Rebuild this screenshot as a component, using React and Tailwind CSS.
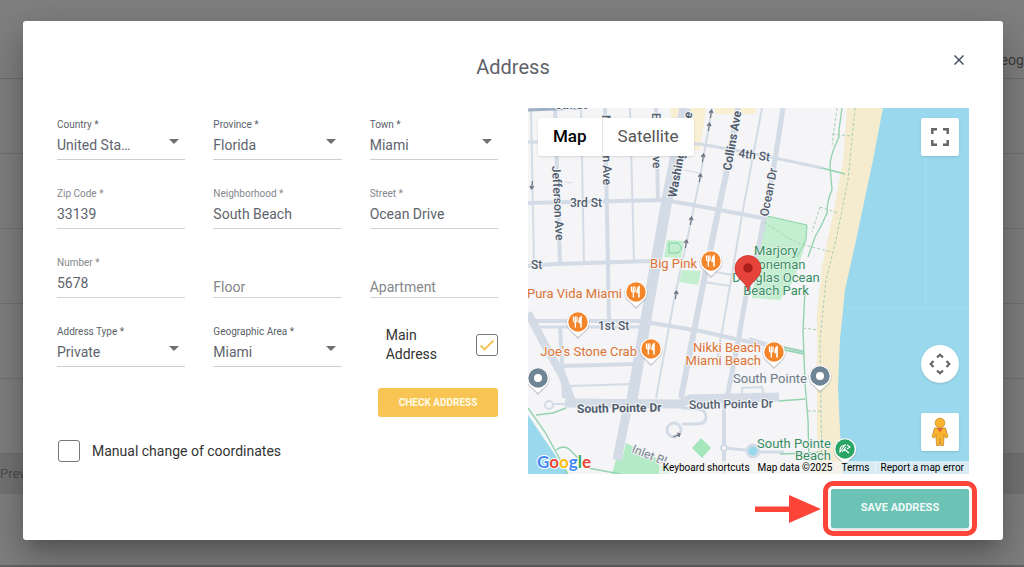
import { useState } from 'react'
import clsx from 'clsx'

const STREET = '#d3dce6'

const streets = [
  // north - south
  { d: 'M531 108 L534 264', w: 2 },
  { d: 'M555 108 L560 263', w: 4 },
  { d: 'M581 108 L584 262', w: 2 },
  { d: 'M605 108 L609 321', w: 4 },
  { d: 'M630 108 L634 261', w: 2 },
  { d: 'M656 108 L658 200', w: 4 },
  { d: 'M685 108 L667 200 L651 290 L632 400', w: 11 },
  { d: 'M629 400 L617 460', w: 9 },
  { d: 'M712 108 L700 178 L686 245 L674 300 L656 398', w: 2 },
  { d: 'M738 108 L727 170 L718 212 L703 285 L681 398', w: 6 },
  { d: 'M762 108 L742 215 L731 280 L717 360', w: 2 },
  { d: 'M783 108 L775 160 L760 240 L747 290 L738 342 L727 398', w: 5 },
  // east - west
  { d: 'M528 142 L660 143 L700 144 L745 152 L775 158 L822 168', w: 3 },
  { d: 'M528 203 L665 200 L720 210 L762 218', w: 4 },
  { d: 'M528 266 L555 264 L652 261', w: 4 },
  { d: 'M704 270 L733 275', w: 2 },
  { d: 'M704 282 L730 286', w: 2 },
  { d: 'M684 170 L699 173', w: 1 },
  { d: 'M565 182 L572 183', w: 1 },
  { d: 'M536 321 L640 321 L700 331 L740 340 L803 352', w: 4 },
  { d: 'M538 327 L640 327', w: 3 },
  { d: 'M562 366 L637 364', w: 4 },
  { d: 'M570 386 L632 384', w: 2 },
  { d: 'M528 313 L545 345 L562 375 L573 404', w: 8 },
  { d: 'M560 326 L564 398', w: 4 },
  { d: 'M565 403 L680 404 L690 399 L779 397', w: 9 },
  { d: 'M681 408 L698 409 Q706 410 706 417 Q706 424 696 424 L682 424', w: 3 },
  { d: 'M724 398 L724 474', w: 4 },
  { d: 'M724 448 L746 450 M760 452 L784 452', w: 3 },
  { d: 'M742 396 L742 388 L762 387 L764 395', w: 2 },
  { d: 'M749 338 L775 346', w: 2 },
  { d: 'M554 404 L566 404', w: 2 },
  { d: 'M728 398 L734 366', w: 2 },
]

const paths = [
  'M842 108 L839 130 L839 137 Q830 155 830 167 L832 190 Q827 200 827 213 Q822 225 815 237 L808 257',
  'M805 290 L803 330 L805 383 L808 420 L809 462',
  'M784 347 L804 352 M784 350 L804 354',
  'M822 168 L845 174',
  'M779 401 L805 399',
  'M528 408 L545 432 L568 474',
  'M536 415 L553 413 L566 408',
  'M556 450 Q564 444 570 450 L588 468 L620 474',
  'M780 454 L808 453 L822 452',
]

const dashedPaths = [
  'M855 108 L848 180 L836 240 L826 280 L820 340 L822 474',
  'M837 108 L832 145',
  'M832 134 L851 136',
  'M820 207 L838 213 M820 207 L812 232',
  'M764 222 L785 236 L800 244 L832 252',
  'M803 328 L818 330',
  'M808 411 L821 411',
]

const oneWays = [
  [711, 114, 0],
  [709, 127, 0],
  [703, 158, 0],
  [700, 178, 0],
  [691, 221, 0],
  [686, 244, 0],
  [676, 295, 0],
  [532, 185, 180],
]

const streetLabels = [
  { text: 'Jefferson Ave', x: 552, y: 166, rotate: 87 },
  { text: 'Meridian Ave', x: 602, y: 115, rotate: 89 },
  { text: 'Euclid Ave', x: 652, y: 113, rotate: 89 },
  { text: 'Washington Ave', x: 676, y: 198, rotate: -79, bold: true },
  { text: 'Collins Ave', x: 731, y: 171, rotate: -80, bold: true },
  { text: 'Ocean Dr', x: 768, y: 217, rotate: -79 },
  { text: '5th St', x: 555, y: 109, bold: true },
  { text: '4th St', x: 738, y: 157, rotate: 8 },
  { text: '3rd St', x: 570, y: 207 },
  { text: 'St', x: 531, y: 269 },
  { text: '1st St', x: 598, y: 330 },
  { text: 'South Pointe Dr', x: 577, y: 413, rotate: -1, bold: true },
  { text: 'South Pointe Dr', x: 689, y: 409, rotate: -1 },
]

function Pin({ x, y, color, children }) {
  return (
    <g transform={`translate(${x} ${y})`}>
      <path d="M0 16 L-7 9 A11.500 11.500 0 1 1 7 9 Z" fill="#8a8f96" opacity="0.4" transform="translate(0 1)" />
      <path d="M0 15 L-6.500 9 A11 11 0 1 1 6.500 9 Z" fill="#fff" />
      <circle r="9.700" fill={color} />
      {children}
    </g>
  )
}

function FoodPin({ x, y }) {
  return (
    <Pin x={x} y={y} color="#f5852b">
      <g fill="none" stroke="#fff" strokeLinecap="round">
        <path d="M-4.500 -5 V-1.500 Q-4.500 0 -2.700 0 Q-1 0 -1 -1.500 V-5 M-2.700 -5 V5" strokeWidth="1.300" />
        <path d="M3 5 V-5 Q1 -3.500 1.200 0.500 H3" strokeWidth="1.600" fill="#fff" />
      </g>
    </Pin>
  )
}

function MapCanvas() {
  return (
    <svg
      className="block w-full h-full"
      viewBox="528 108 441 366"
      preserveAspectRatio="xMidYMid slice"
      fontFamily="Roboto, sans-serif"
      fontSize="12"
      role="img"
      aria-label="Map of South Beach, Miami"
    >
      <rect x="528" y="108" width="441" height="366" fill="#f5f4f6" />

      {/* Blocks and parks */}
      <path d="M670 108 H706 L700 150 H676 Z M714 108 H757 L755 114 H716 Z" fill="#f9efd2" />
      <g fill="#c3efd0">
        <path d="M767 216 L807 225 L806 242 L794 280 L780 300 L752 298 L758 250 Z" />
        <path d="M667 240 L684 241 L681 258 L664 257 Z" />
        <path d="M682 270 L701 271 L698 285 L679 282 Z" />
        <path d="M701 438 L711 448 L702 458 L692 448 Z" fill="#a5e7bd" />
        <path d="M626 443 L668 464 L670 474 H612 L616 459 H622 Z" fill="#b3ebc6" />
      </g>
      <path d="M767 216 L807 225 L806 240 L797 257" fill="none" stroke="#8bd3a8" />
      <path d="M669 243 H678 L682 248 L678 253 H669 Z" fill="none" stroke="#80d3a1" />

      {/* Beach and water */}
      <path d="M847 108 L843 160 L833 215 L822 267 L817 313 L817 474 H890 V108 Z" fill="#f5ebcf" />
      <path
        d="M883 108 L873 160 L855 245 L845 290 L840 340 L838 387 L840 430 L842 474 H969 V108 Z"
        fill="#99d8ed"
      />
      <path d="M528 415 L568 474 H528 Z" fill="#99d8ed" />
      <path d="M926 156 V308 M843 308 H969" stroke="#a6deef" fill="none" />

      {/* Streets */}
      <g fill="none" stroke={STREET} strokeLinejoin="round">
        {streets.map((s) => (
          <path key={s.d} d={s.d} strokeWidth={s.w} />
        ))}
        <circle cx="674" cy="430" r="7" strokeWidth="3" />
        <circle cx="549" cy="405" r="4" strokeWidth="2" />
        <circle cx="724" cy="448" r="3" strokeWidth="2" fill="#f5f4f6" />
      </g>
      <path d="M528 110 L580 108" stroke="#9fb0c4" strokeWidth="3" />
      <circle cx="753" cy="451" r="6" fill="#99d8ed" stroke={STREET} strokeWidth="3" />

      <g fill="none" stroke="#93d3b0" strokeWidth="1.400">
        {paths.map((d) => (
          <path key={d} d={d} />
        ))}
      </g>
      <g fill="none" stroke="#a8cfb4" strokeDasharray="3 2">
        {dashedPaths.map((d) => (
          <path key={d} d={d} />
        ))}
      </g>

      <g fill="none" stroke="#6d7480" strokeWidth="1.200">
        {oneWays.map(([x, y, r]) => (
          <path key={`${x}-${y}`} d="M-2 -1 L0 -4 L2 -1 M0 -4 V4" transform={`translate(${x} ${y}) rotate(${r + 8})`} />
        ))}
        <path d="M673 437 L680 434 M677 433 L680 434 L679 437" />
      </g>

      {/* Labels */}
      <g fill="#4f5d6f" stroke="#f5f4f6" strokeWidth="2" strokeLinejoin="round" paintOrder="stroke">
        {streetLabels.map((l) => (
          <text
            key={`${l.text}-${l.x}`}
            transform={`translate(${l.x} ${l.y}) rotate(${l.rotate || 0})`}
            fontWeight={l.bold ? 700 : 500}
          >
            {l.text}
          </text>
        ))}
        <text transform="translate(631 452) rotate(22)" fill="#7a8491">
          Inlet Bl
        </text>
      </g>
      <g fill="#dc7436" stroke="#f5f4f6" strokeWidth="2" strokeLinejoin="round" paintOrder="stroke" textAnchor="end" fontSize="13">
        <text x="697" y="268">Big Pink</text>
        <text x="622" y="298">Pura Vida Miami</text>
        <text x="637" y="356">Joe's Stone Crab</text>
        <text x="761" y="352">Nikki Beach</text>
        <text x="761" y="365">Miami Beach</text>
        <text x="807" y="383" fill="#6d7c8a">South Pointe</text>
        <text x="831" y="448" fill="#358f62">South Pointe</text>
        <text x="831" y="460" fill="#358f62">Beach</text>
      </g>
      <g fill="#358f62" stroke="#f5f4f6" strokeWidth="1" strokeLinejoin="round" paintOrder="stroke" textAnchor="middle" fontSize="13">
        <text x="776" y="255">Marjory</text>
        <text x="776" y="269">Stoneman</text>
        <text x="776" y="282">Douglas Ocean</text>
        <text x="776" y="295">Beach Park</text>
      </g>

      {/* Places */}
      <FoodPin x={711} y={261} />
      <FoodPin x={636} y={292} />
      <FoodPin x={578} y={322} />
      <FoodPin x={651} y={349} />
      <FoodPin x={774} y={352} />
      <Pin x={538} y={378} color="#6f8494">
        <circle r="4" fill="#fff" />
      </Pin>
      <Pin x={820} y={376} color="#6f8494">
        <circle r="4" fill="#fff" />
      </Pin>
      <Pin x={845} y={449} color="#2aa566">
        <path d="M-5 3 Q-6 -3 0 -4 L-3 0 Z M2 -4 L5 -2 L2 0 M-1 0 L4 4 M1 -2 L-3 3" fill="none" stroke="#fff" strokeWidth="1.200" />
      </Pin>

      {/* Selected address */}
      <path
        d="M748 291 C747 282 735 279 735 268.500 A12.700 12.700 0 0 1 761 268.500 C761 279 749 282 748 291 Z"
        fill="#e6433a"
        stroke="#c5352e"
        strokeWidth="0.800"
      />
      <circle cx="748" cy="268" r="4.700" fill="#a81f1c" />

      {/* Logo */}
      <text
        x="537"
        y="468"
        fontFamily="Lato, Roboto, sans-serif"
        fontSize="17"
        fontWeight="700"
        stroke="#fff"
        strokeWidth="2"
        strokeLinejoin="round"
        paintOrder="stroke"
      >
        <tspan fill="#4285f4">G</tspan>
        <tspan fill="#ea4335">o</tspan>
        <tspan fill="#fbbc04">o</tspan>
        <tspan fill="#4285f4">g</tspan>
        <tspan fill="#34a853">l</tspan>
        <tspan fill="#ea4335">e</tspan>
      </text>
    </svg>
  )
}

function AddressMap() {
  const [mapType, setMapType] = useState('Map')

  return (
    <div className="relative h-[366px] overflow-hidden">
      <MapCanvas />

      <div className="absolute top-[10px] left-[10px] flex h-[38px] bg-white rounded-xs shadow-sm divide-x divide-gray-200">
        {['Map', 'Satellite'].map((type) => (
          <button
            key={type}
            type="button"
            onClick={() => setMapType(type)}
            className={clsx(
              'px-[15px] text-[17px]',
              mapType === type ? 'font-medium text-black' : 'text-[#565656]'
            )}
          >
            {type}
          </button>
        ))}
      </div>

      <button
        type="button"
        aria-label="Toggle fullscreen view"
        className="absolute top-[10px] right-[10px] flex items-center justify-center size-[38px] bg-white rounded-xs shadow-sm"
      >
        <svg className="size-[18px]" viewBox="0 0 18 18" fill="none" stroke="#666" strokeWidth="2.500">
          <path d="M1.300 6 V1.300 H6 M12 1.300 H16.700 V6 M16.700 12 V16.700 H12 M6 16.700 H1.300 V12" />
        </svg>
      </button>

      <div className="absolute right-[10px] bottom-[23px] flex flex-col gap-[30px]">
        <button
          type="button"
          aria-label="Map camera controls"
          className="flex items-center justify-center size-[38px] bg-white rounded-full shadow-sm"
        >
          <svg className="size-[22px]" viewBox="0 0 22 22" fill="none" stroke="#666" strokeWidth="2.200">
            <path d="M8 4.500 L11 1.700 L14 4.500 M8 17.500 L11 20.300 L14 17.500 M4.500 8 L1.700 11 L4.500 14 M17.500 8 L20.300 11 L17.500 14" />
          </svg>
        </button>
        <button
          type="button"
          aria-label="Drag Pegman onto the map to open Street View"
          className="flex items-center justify-center size-[38px] bg-white rounded-xs shadow-sm"
        >
          <svg className="w-[18px] h-[30px]" viewBox="0 0 18 30">
            <path
              d="M3.500 11 H14.500 L17 20 L14.500 21 L13 17.500 L12.500 28.500 H9.700 L9 21 L8.300 28.500 H5.500 L5 17.500 L3.500 21 L1 20 Z"
              fill="#f9b32f"
              stroke="#c88a2a"
              strokeWidth="0.800"
            />
            <path d="M6 11 L9 15.500 L12 11 Z" fill="#e2603a" />
            <circle cx="9" cy="6" r="4.800" fill="#f9b32f" stroke="#c88a2a" strokeWidth="0.800" />
          </svg>
        </button>
      </div>

      <div className="absolute right-0 bottom-0 flex text-[10px] leading-[13px] text-black">
        <button type="button" className="px-1 bg-[#f5f5f5]/70">
          Keyboard shortcuts
        </button>
        <span className="px-1 bg-[#f5f5f5]/70">Map data ©2025</span>
        <a href="#terms" className="px-[5px] bg-[#f5f5f5]/70">
          Terms
        </a>
        <a href="#report" className="px-[5px] bg-[#f5f5f5]/70 border-l border-white/40">
          Report a map error
        </a>
      </div>
    </div>
  )
}

function SelectField({ id, label, value }) {
  return (
    <div className="flex flex-col h-11 border-b border-[#cfcfcf]">
      <label htmlFor={id} className="pt-px text-[10px] leading-4 text-[#5a5f69]">
        {label}
      </label>
      <div className="grid flex-1">
        <select
          id={id}
          className="col-start-1 row-start-1 self-start w-full h-6 pr-[54px] appearance-none truncate bg-transparent text-sm text-[#60646c] outline-none"
        >
          <option>{value}</option>
        </select>
        <svg
          className="col-start-1 row-start-1 justify-self-end self-start w-[10px] h-[5px] mr-[6px] mt-[6px] pointer-events-none"
          viewBox="0 0 10 5"
        >
          <path d="M0 0 H10 L5 5 Z" fill="#6f6f6f" />
        </svg>
      </div>
    </div>
  )
}

function TextField({ id, label, value }) {
  return (
    <div className="flex flex-col h-11 border-b border-[#d2d2d2]">
      <label htmlFor={id} className="pt-px text-[10px] leading-4 text-[#84878c]">
        {label}
      </label>
      <input
        id={id}
        type="text"
        defaultValue={value}
        className="w-full h-6 min-w-0 bg-transparent text-sm text-[#60646c] outline-none"
      />
    </div>
  )
}

function EmptyField({ id, label }) {
  return (
    <div className="flex items-end h-11 border-b border-[#d2d2d2]">
      <input
        id={id}
        type="text"
        aria-label={label}
        placeholder={label}
        className="w-full min-w-0 bg-transparent text-sm text-[#60646c] placeholder:text-[#84878c] outline-none"
      />
    </div>
  )
}

function Checkbox({ id, defaultChecked }) {
  return (
    <span className="grid shrink-0 size-[22px]">
      <input
        id={id}
        type="checkbox"
        defaultChecked={defaultChecked}
        className="peer col-start-1 row-start-1 size-[22px] appearance-none bg-white border border-[#777] rounded-[3px]"
      />
      <svg
        className="hidden peer-checked:block col-start-1 row-start-1 size-[22px] pointer-events-none"
        viewBox="0 0 22 22"
        fill="none"
        stroke="#f5c152"
        strokeWidth="1.800"
      >
        <path d="M4.500 11.500 L8.500 15.500 L17.500 6.500" />
      </svg>
    </span>
  )
}

function AddressForm() {
  return (
    <div className="pt-2">
      <div className="grid grid-cols-3 gap-x-7 gap-y-[25px]">
        <SelectField id="country" label="Country *" value="United States" />
        <SelectField id="province" label="Province *" value="Florida" />
        <SelectField id="town" label="Town *" value="Miami" />
        <TextField id="zip" label="Zip Code *" value="33139" />
        <TextField id="neighborhood" label="Neighborhood *" value="South Beach" />
        <TextField id="street" label="Street *" value="Ocean Drive" />
        <TextField id="number" label="Number *" value="5678" />
        <EmptyField id="floor" label="Floor" />
        <EmptyField id="apartment" label="Apartment" />
        <SelectField id="type" label="Address Type *" value="Private" />
        <SelectField id="area" label="Geographic Area *" value="Miami" />
        <div className="flex items-center justify-between pl-4">
          <label htmlFor="main" className="w-16 text-sm leading-[19px] text-[#333]">
            Main Address
          </label>
          <Checkbox id="main" defaultChecked />
        </div>
      </div>

      <div className="flex justify-end mt-[21px]">
        <button
          type="button"
          className="w-[120px] h-[29px] pb-px bg-[#f8c554] rounded-[3px] text-[10px] font-bold text-[#fffbe9]"
        >
          CHECK ADDRESS
        </button>
      </div>

      <div className="flex items-center gap-3 mt-[23px] pl-px">
        <Checkbox id="manual" />
        <label htmlFor="manual" className="text-sm text-[#333]">
          Manual change of coordinates
        </label>
      </div>
    </div>
  )
}

// Page under the backdrop
function PageBehind() {
  return (
    <div className="absolute inset-0 flex flex-col overflow-hidden bg-[#808080] text-[#3c3c3c]" aria-hidden="true">
      <div className="flex justify-end items-end shrink-0 h-[79px] pb-2 border-b border-[#6f6f6f] text-sm">
        <span className="w-[33px] whitespace-nowrap">Geographic Area</span>
      </div>
      {[1, 2, 3, 4, 5].map((row) => (
        <div key={row} className="shrink-0 h-[75px] border-b border-[#727272]" />
      ))}
      <div className="flex items-center shrink-0 h-10 bg-[#757575] text-[13px] text-[#4d4d4d]">Prev</div>
      <div className="flex-1" />
      <div className="shrink-0 h-[2px] bg-[#636363]" />
    </div>
  )
}

export default function App() {
  return (
    <div className="relative min-h-screen pt-[21px] pr-[21px] pb-[27px] pl-[23px] font-[Roboto,sans-serif]">
      <PageBehind />

      <div
        role="dialog"
        aria-labelledby="dialog-title"
        className="relative px-[34px] pb-3 bg-white rounded-[3px] shadow-[0_11px_15px_-7px_rgba(0,0,0,0.2),0_24px_38px_3px_rgba(0,0,0,0.14),0_9px_46px_8px_rgba(0,0,0,0.12)]"
      >
        <header className="grid grid-cols-[1fr_auto_1fr] h-[87px] pt-8">
          <h2 id="dialog-title" className="col-start-2 text-xl leading-7 text-[#5f6269]">
            Address
          </h2>
          <button type="button" aria-label="Close" className="flex items-center justify-center justify-self-end size-5 -mt-[3px]">
            <svg className="size-[10px]" viewBox="0 0 10 10" stroke="#4a5162" strokeWidth="1.500">
              <path d="M0.500 0.500 L9.500 9.500 M9.500 0.500 L0.500 9.500" />
            </svg>
          </button>
        </header>

        <div className="grid grid-cols-2 gap-[30px]">
          <AddressForm />
          <AddressMap />
        </div>

        <footer className="flex items-center justify-end gap-[10px] mt-[15px]">
          <svg className="w-[66px] h-7" viewBox="0 0 66 28" fill="#fd4438">
            <path d="M0 11.500 H34 V0 L66 14 L34 28 V17 H0 Z" />
          </svg>
          <div className="relative">
            <button
              type="button"
              className="block w-[138px] h-[39px] bg-[#6cc2b5] rounded-xs shadow-md text-[11px] font-bold text-[#effaf8]"
            >
              SAVE ADDRESS
            </button>
            <div className="absolute -inset-2 border-[5px] border-[#fd4438] rounded-[10px] pointer-events-none" />
          </div>
        </footer>
      </div>
    </div>
  )
}
